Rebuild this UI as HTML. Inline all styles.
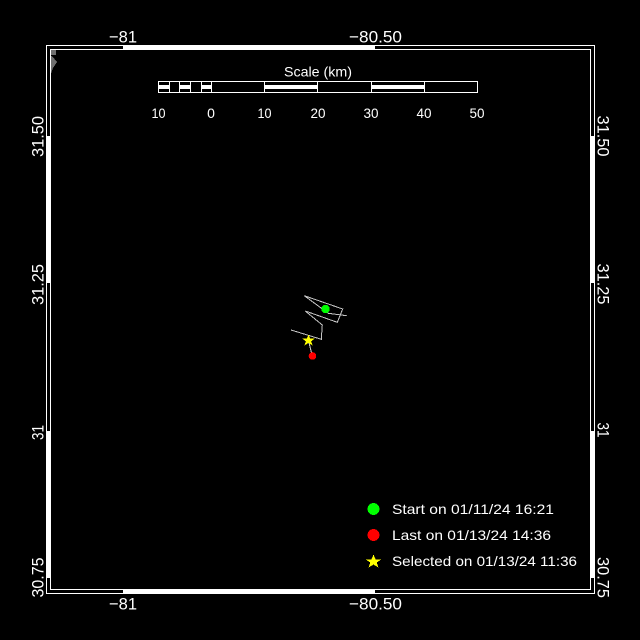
<!DOCTYPE html>
<html>
<head>
<meta charset="utf-8">
<style>
html,body{margin:0;padding:0;background:#000;width:640px;height:640px;overflow:hidden}
svg{display:block}
text{font-family:"Liberation Sans",sans-serif;fill:#fff;font-weight:400}
.a{font-size:17px;text-anchor:middle}
.s{font-size:14px;text-anchor:middle}
.l{font-size:14px}
</style>
</head>
<body>
<svg width="640" height="640" viewBox="0 0 640 640" xmlns="http://www.w3.org/2000/svg">
<rect width="640" height="640" fill="#000"/>
<g shape-rendering="crispEdges">
<polygon points="51,50 56,50 56,55 51,55" fill="#707070"/>
<polygon points="52,56 57,62 53,68 51,74 51,56" fill="#707070"/>
<rect x="46.5" y="45.5" width="548" height="548" fill="none" stroke="#fff"/>
<rect x="50.5" y="49.5" width="540" height="540" fill="none" stroke="#fff"/>
<g fill="#fff">
<rect x="123" y="45" width="252" height="5"/>
<rect x="123" y="589" width="252" height="5"/>
<rect x="46" y="136" width="5" height="147"/>
<rect x="46" y="431" width="5" height="147"/>
<rect x="590" y="136" width="5" height="147"/>
<rect x="590" y="431" width="5" height="147"/>
<rect x="158" y="85" width="11" height="4"/>
<rect x="180" y="85" width="10" height="4"/>
<rect x="201" y="85" width="10" height="4"/>
<rect x="264" y="85" width="53" height="4"/>
<rect x="371" y="85" width="53" height="4"/>
</g>
<g fill="none" stroke="#fff">
<rect x="158.5" y="81.5" width="319" height="11"/>
<path d="M169.5 81V92M179.5 81V92M190.5 81V92M201.5 81V92M211.5 81V92M264.5 81V92M317.5 81V92M371.5 81V92M424.5 81V92"/>
</g>
<g fill="none" stroke="#c4c4c4" stroke-width="1">
<path d="M291 330L321.3 339.3L322.3 325L305.3 311L337.3 322.3L342.7 309L304.3 295.7L328.3 313.3L346.7 315.7"/>
<path d="M308.3 340L312.3 356"/>
</g>
<circle cx="325.5" cy="309" r="4.2" fill="#00ff00"/>
<circle cx="312.5" cy="356" r="3.8" fill="#ff0000"/>
<polygon points="308.5,334.5 310.2,338.5 315,338.5 311.2,341.2 312.6,345.5 308.5,342.9 304.4,345.5 305.8,341.2 302,338.5 306.8,338.5" fill="#ffff00"/>
<circle cx="373.5" cy="509" r="6" fill="#00ff00"/>
<circle cx="373.5" cy="535" r="6" fill="#ff0000"/>
<polygon points="373.5,554.5 375.5,559.3 381.5,559.3 376.7,562.5 378.4,567.5 373.5,564.5 368.6,567.5 370.3,562.5 365.5,559.3 371.5,559.3" fill="#ffff00"/>
</g>
<text class="a" x="123" y="42.5" textLength="28" lengthAdjust="spacingAndGlyphs">−81</text>
<text class="a" x="375.5" y="42.5" textLength="53" lengthAdjust="spacingAndGlyphs">−80.50</text>
<text class="a" x="123" y="609.5" textLength="28" lengthAdjust="spacingAndGlyphs">−81</text>
<text class="a" x="375.5" y="609.5" textLength="53" lengthAdjust="spacingAndGlyphs">−80.50</text>
<text class="a" transform="translate(43.5,136.5) rotate(-90)" textLength="41" lengthAdjust="spacingAndGlyphs">31.50</text>
<text class="a" transform="translate(43.5,284.5) rotate(-90)" textLength="41" lengthAdjust="spacingAndGlyphs">31.25</text>
<text class="a" transform="translate(43.5,432.5) rotate(-90)" textLength="15" lengthAdjust="spacingAndGlyphs">31</text>
<text class="a" transform="translate(43.5,577.5) rotate(-90)" textLength="40" lengthAdjust="spacingAndGlyphs">30.75</text>
<text class="a" transform="translate(597.5,136) rotate(90)" textLength="41" lengthAdjust="spacingAndGlyphs">31.50</text>
<text class="a" transform="translate(597.5,284) rotate(90)" textLength="41" lengthAdjust="spacingAndGlyphs">31.25</text>
<text class="a" transform="translate(597.5,430) rotate(90)" textLength="15" lengthAdjust="spacingAndGlyphs">31</text>
<text class="a" transform="translate(597.5,577.5) rotate(90)" textLength="41" lengthAdjust="spacingAndGlyphs">30.75</text>
<text class="s" x="318" y="76.5" textLength="68" lengthAdjust="spacingAndGlyphs">Scale (km)</text>
<text class="s" x="158.5" y="118" textLength="14" lengthAdjust="spacingAndGlyphs">10</text>
<text class="s" x="211" y="118">0</text>
<text class="s" x="264.5" y="118" textLength="14" lengthAdjust="spacingAndGlyphs">10</text>
<text class="s" x="318" y="118" textLength="15" lengthAdjust="spacingAndGlyphs">20</text>
<text class="s" x="371" y="118" textLength="15" lengthAdjust="spacingAndGlyphs">30</text>
<text class="s" x="424" y="118" textLength="15" lengthAdjust="spacingAndGlyphs">40</text>
<text class="s" x="477" y="118" textLength="15" lengthAdjust="spacingAndGlyphs">50</text>
<text class="l" x="392" y="514" textLength="162" lengthAdjust="spacingAndGlyphs">Start on 01/11/24 16:21</text>
<text class="l" x="392" y="540" textLength="159" lengthAdjust="spacingAndGlyphs">Last on 01/13/24 14:36</text>
<text class="l" x="392" y="566" textLength="185" lengthAdjust="spacingAndGlyphs">Selected on 01/13/24 11:36</text>
</svg>
</body>
</html>
